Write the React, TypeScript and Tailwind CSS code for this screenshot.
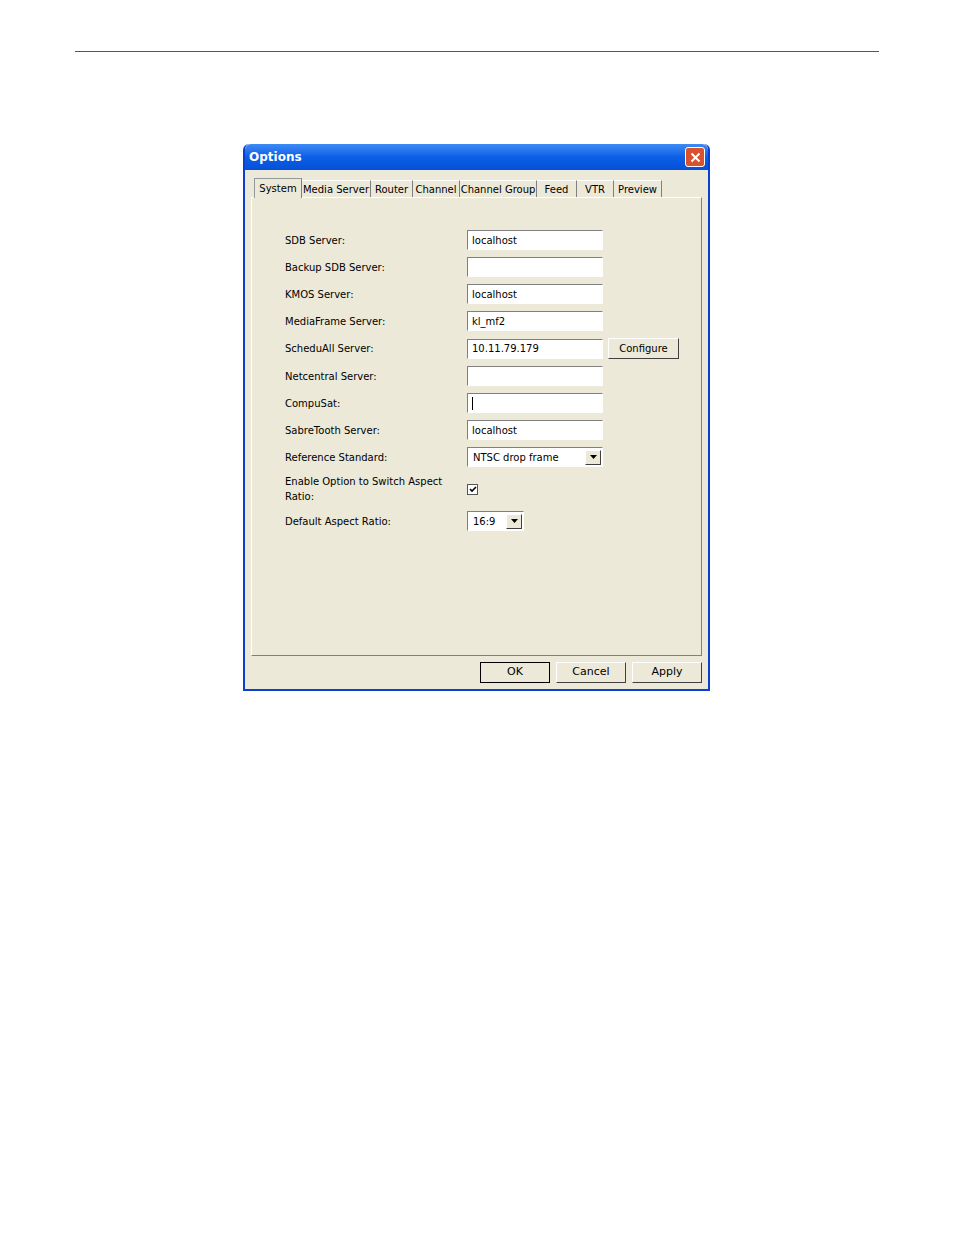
const rows: { label: string; value?: string; kind?: string }[] = [
  { label: 'SDB Server:', value: 'localhost' },
  { label: 'Backup SDB Server:', value: '' },
  { label: 'KMOS Server:', value: 'localhost' },
  { label: 'MediaFrame Server:', value: 'kl_mf2' },
  { label: 'ScheduAll Server:', value: '10.11.79.179', kind: 'configure' },
  { label: 'Netcentral Server:', value: '' },
  { label: 'CompuSat:', value: '', kind: 'caret' },
  { label: 'SabreTooth Server:', value: 'localhost' },
  { label: 'Reference Standard:', value: 'NTSC drop frame', kind: 'select' },
  { label: 'Enable Option to Switch Aspect Ratio:', kind: 'check' },
  { label: 'Default Aspect Ratio:', value: '16:9', kind: 'small' },
];

const tabs = [
  ['Media Server', 'w-[69px]'],
  ['Router', 'w-[42px]'],
  ['Channel', 'w-[47px]'],
  ['Channel Group', 'w-[77px]'],
  ['Feed', 'w-[40px]'],
  ['VTR', 'w-[37px]'],
  ['Preview', 'w-[48px]'],
];

function Arrow() {
  return (
    <span className="flex h-[15px] w-[16px] items-center justify-center border border-t-white border-l-white border-r-[#404040] border-b-[#404040] bg-[#ece9d8]">
      <svg width="7" height="4" viewBox="0 0 7 4"><path d="M0 0h7L3.5 4z" fill="#000" /></svg>
    </span>
  );
}

function Field({ r }: { r: (typeof rows)[number] }) {
  const box = 'h-[20px] border border-t-[#7f7f7f] border-l-[#7f7f7f] border-r-white border-b-white bg-white flex items-center';
  if (r.kind === 'check')
    return (
      <div className="flex h-[20px] items-center">
        <span className="flex h-[11px] w-[11px] items-center justify-center border border-[#555] bg-white">
          <svg width="8" height="7" viewBox="0 0 8 7"><path d="M1 3l2 2 4-4" stroke="#000" strokeWidth="1.6" fill="none" /></svg>
        </span>
      </div>
    );
  if (r.kind === 'select' || r.kind === 'small')
    return (
      <div className={`${box} ${r.kind === 'small' ? 'w-[57px]' : 'w-[136px]'} justify-between pl-[5px] pr-[1px]`}>
        <span>{r.value}</span>
        <Arrow />
      </div>
    );
  return (
    <div className="flex items-center gap-[5px]">
      <div className={`${box} w-[136px] px-[4px]`}>
        {r.kind === 'caret' ? <span className="h-[13px] w-px bg-black" /> : r.value}
      </div>
      {r.kind === 'configure' && (
        <button className="h-[21px] w-[71px] border border-t-white border-l-white border-r-[#404040] border-b-[#404040] bg-[#ece9d8] text-center">
          Configure
        </button>
      )}
    </div>
  );
}

export default function App() {
  return (
    <div className="relative h-[1235px] w-[954px] bg-white text-[11px] text-black" style={{ fontFamily: 'Tahoma, "DejaVu Sans", sans-serif' }}>
      <div className="absolute left-[75px] top-[51px] h-px w-[804px] bg-[#555]" />
      <div className="absolute left-[243px] top-[144px] w-[467px] rounded-t-[6px] border-x-[2px] border-b-[2px] border-[#0a3fd0] bg-[#ece9d8]">
        <div className="flex h-[26px] items-center justify-between rounded-t-[6px] bg-gradient-to-b from-[#3d8bf5] via-[#0b5fe6] to-[#0650d8] pl-[4px] pr-[3px]">
          <span className="text-[12px] font-bold text-white">Options</span>
          <span className="flex h-[20px] w-[20px] items-center justify-center rounded-[3px] border border-white bg-[#d9522f]">
            <svg width="11" height="11" viewBox="0 0 11 11"><path d="M1.5 1.5l8 8M9.5 1.5l-8 8" stroke="#fff" strokeWidth="2" /></svg>
          </span>
        </div>
        <div className="px-[6px] pt-[8px]">
          <div className="flex items-end pl-[3px] text-[10px]">
            <div className="z-10 mb-[-1px] flex h-[20px] w-[48px] items-center justify-center border-x border-t border-[#919b9c] border-r-[#808080] bg-[#ece9d8]">System</div>
            {tabs.map(([t, w]) => (
              <div key={t} className={`flex h-[17px] ${w} items-center justify-center border-r border-[#808080] border-t border-t-white`}>{t}</div>
            ))}
          </div>
          <div className="h-[459px] w-[451px] border border-l-white border-t-white border-r-[#808080] border-b-[#808080] pl-[33px] pt-[32px] text-[10px]">
            <div className="flex flex-col gap-[7px]">
              {rows.map((r) => (
                <div key={r.label} className="flex items-center">
                  <span className="w-[182px]">{r.label}</span>
                  <Field r={r} />
                </div>
              ))}
            </div>
          </div>
          <div className="flex justify-end gap-[6px] py-[6px] text-[11px]">
            {['OK', 'Cancel', 'Apply'].map((b) => (
              <button key={b} className={`h-[21px] w-[70px] border bg-[#ece9d8] ${b === 'OK' ? 'border-black' : 'border-t-white border-l-white border-r-[#404040] border-b-[#404040]'}`}>{b}</button>
            ))}
          </div>
        </div>
      </div>
    </div>
  );
}
